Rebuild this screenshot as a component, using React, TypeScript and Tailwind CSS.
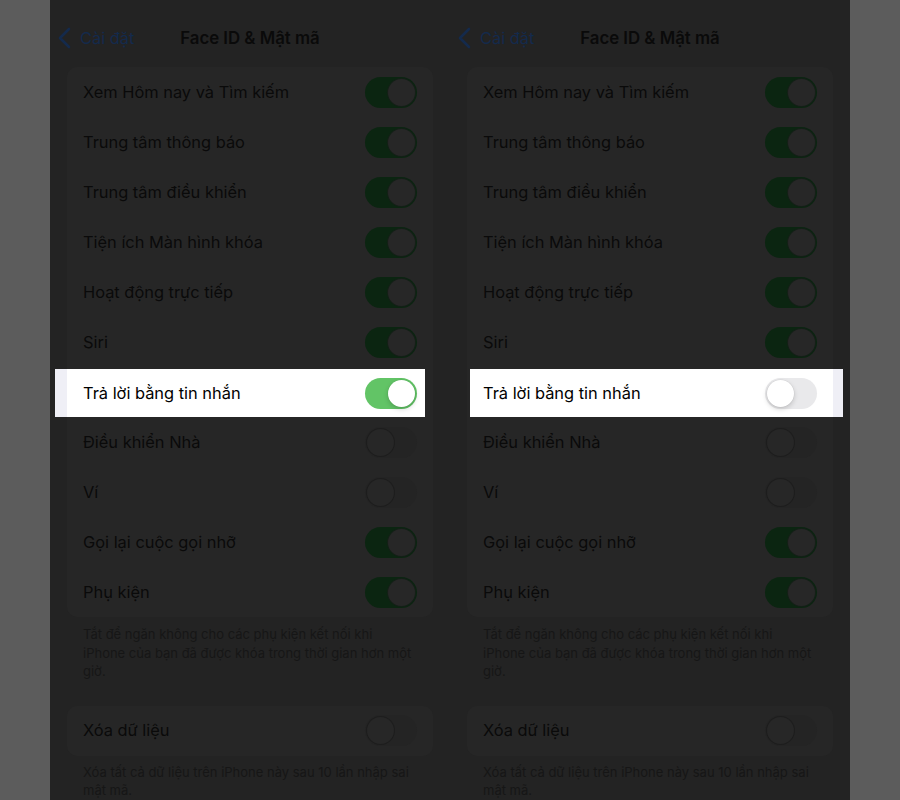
const rows = [
  { label: "Xem Hôm nay và Tìm kiếm", on: true },
  { label: "Trung tâm thông báo", on: true },
  { label: "Trung tâm điều khiển", on: true },
  { label: "Tiện ích Màn hình khóa", on: true },
  { label: "Hoạt động trực tiếp", on: true },
  { label: "Siri", on: true },
  { label: "Trả lời bằng tin nhắn", on: true, highlight: true },
  { label: "Điều khiển Nhà", on: false },
  { label: "Ví", on: false },
  { label: "Gọi lại cuộc gọi nhỡ", on: true },
  { label: "Phụ kiện", on: true },
];

function DimToggle({ on }: { on: boolean }) {
  return (
    <div
      className={`w-[52px] h-[31px] rounded-full p-[2px] flex ${
        on ? "bg-[#0b2511] justify-end" : "bg-[#242424] justify-start"
      }`}
    >
      <div
        className={`w-[27px] h-[27px] rounded-full bg-[#272727] ring-1 ${
          on ? "ring-[#142017]" : "ring-[#1d1d1d]"
        }`}
      />
    </div>
  );
}

function BrightToggle({ on }: { on: boolean }) {
  return (
    <div
      className={`w-[52px] h-[31px] rounded-full p-[2px] flex ${
        on ? "bg-[#62c466] justify-end" : "bg-[#e9e9eb] justify-start"
      }`}
    >
      <div className="w-[27px] h-[27px] rounded-full bg-white shadow-[0_2px_5px_rgba(0,0,0,0.18)] ring-[0.5px] ring-black/5" />
    </div>
  );
}

function Phone({ replyOn }: { replyOn: boolean }) {
  return (
    <div className="w-[400px] h-[800px] bg-[#232323] overflow-hidden">
      {/* nav bar */}
      <div className="relative h-[67px] flex items-start pt-[26px]">
        <div className="flex items-center pl-[8px] gap-[9px]">
          <svg width="13" height="22" viewBox="0 0 13 22" fill="none">
            <path
              d="M11 2 L2 11 L11 20"
              stroke="#142a4c"
              strokeWidth="2.6"
              strokeLinecap="round"
              strokeLinejoin="round"
            />
          </svg>
          <span className="text-[16.4px] text-[#142a4c]">Cài đặt</span>
        </div>
        <div className="absolute left-0 right-0 top-[26px] text-center text-[16.8px] font-semibold text-[#0a0a0a]">
          Face ID &amp; Mật mã
        </div>
      </div>

      {/* main card */}
      <div className="mx-[17px] rounded-[10px] bg-[#262626]">
        {rows.map((r, i) =>
          r.highlight ? (
            <div
              key={i}
              className={`h-[48px] mt-[2px] flex ${
                replyOn ? "-ml-[12px] mr-[8px]" : "ml-[3px] -mr-[10px]"
              }`}
            >
              {replyOn && <div className="w-[12px] bg-[#efeff6]" />}
              <div
                className={`flex-1 bg-white flex items-center justify-between ${
                  replyOn ? "pl-[16px] pr-[8px]" : "pl-[13px] pr-[16px]"
                }`}
              >
                <span className="text-[16.4px] text-black">{r.label}</span>
                <BrightToggle on={replyOn} />
              </div>
              {!replyOn && <div className="w-[10px] bg-[#efeff6]" />}
            </div>
          ) : (
            <div
              key={i}
              className="h-[50px] flex items-center justify-between px-[16px]"
            >
              <span className="text-[16.4px] text-[#0a0a0a]">{r.label}</span>
              <DimToggle on={r.on} />
            </div>
          )
        )}
      </div>
      <p className="px-[33px] pt-[8px] text-[13px] leading-[18.5px] text-[#161616]">
        Tắt để ngăn không cho các phụ kiện kết nối khi iPhone của bạn đã được
        khóa trong thời gian hơn một giờ.
      </p>

      {/* erase data card */}
      <div className="mx-[17px] mt-[25px] rounded-[10px] bg-[#262626]">
        <div className="h-[50px] flex items-center justify-between px-[16px]">
          <span className="text-[16.4px] text-[#0a0a0a]">Xóa dữ liệu</span>
          <DimToggle on={false} />
        </div>
      </div>
      <p className="px-[33px] pt-[7px] text-[13px] leading-[18.5px] text-[#161616]">
        Xóa tất cả dữ liệu trên iPhone này sau 10 lần nhập sai mật mã.
      </p>
    </div>
  );
}

export default function App() {
  return (
    <div
      className="w-[900px] h-[800px] bg-[#5c5c5c] flex justify-center overflow-hidden"
      style={{ fontFamily: "Inter, 'Noto Sans', sans-serif" }}
    >
      <Phone replyOn={true} />
      <Phone replyOn={false} />
    </div>
  );
}
